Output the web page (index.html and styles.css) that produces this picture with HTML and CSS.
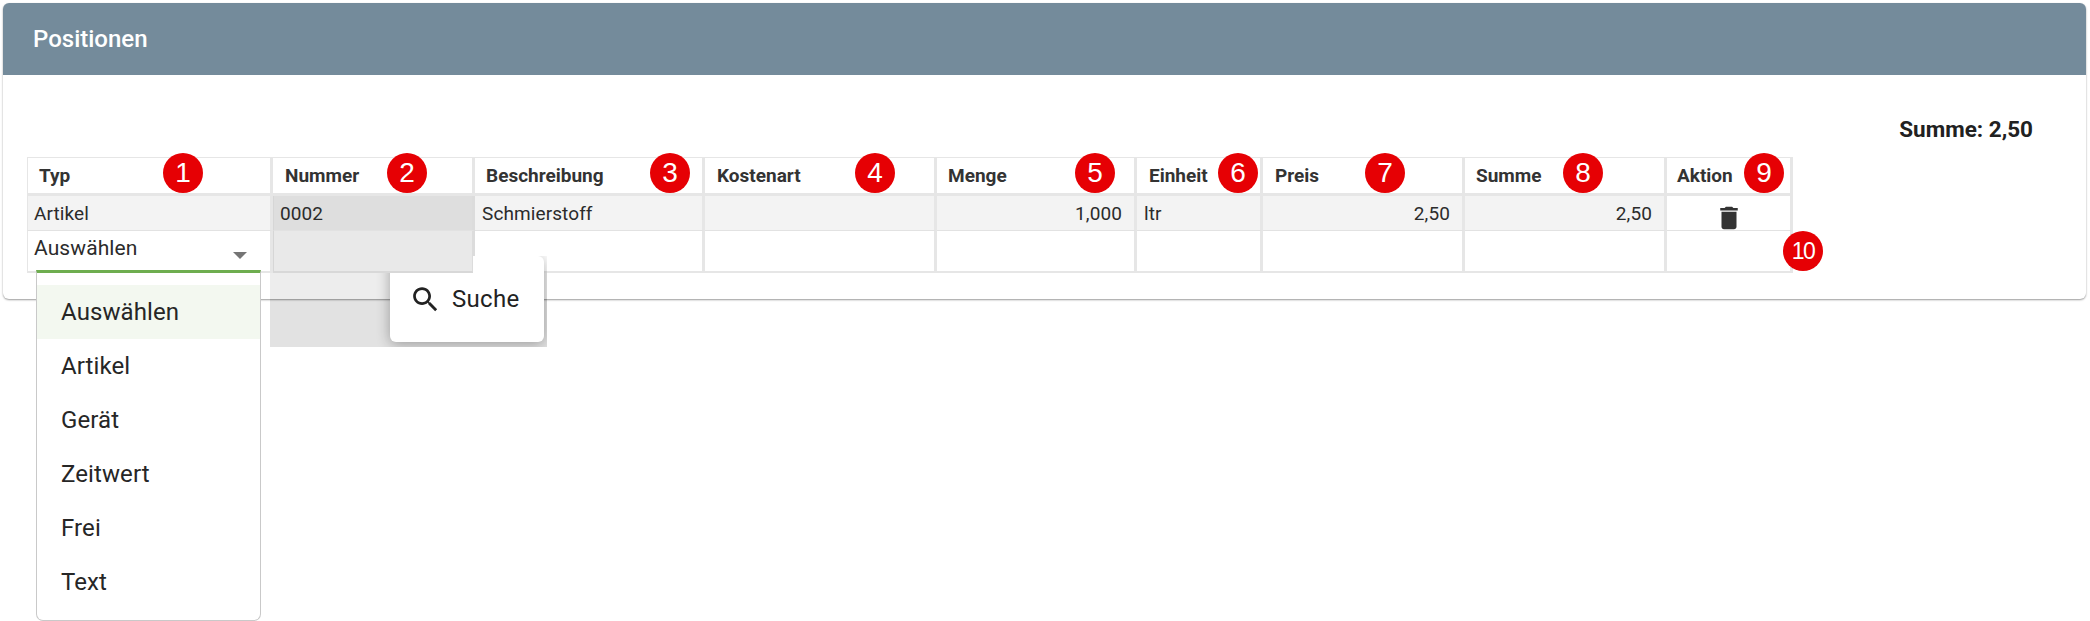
FILE: index.html
```html
<!DOCTYPE html>
<html lang="de">
<head>
<meta charset="utf-8">
<title>Positionen</title>
<link rel="stylesheet" href="styles.css">
</head>
<body>
<div class="page">
  <section class="card">
    <header class="card-head">Positionen</header>
    <div class="card-body">
      <div class="total">Summe: 2,50</div>
      <table class="grid">
        <colgroup>
          <col class="c1"><col class="c2"><col class="c3"><col class="c4"><col class="c5"><col class="c6"><col class="c7"><col class="c8"><col class="c9">
        </colgroup>
        <thead>
          <tr>
            <th>Typ<span class="badge b1">1</span></th>
            <th>Nummer<span class="badge b2">2</span></th>
            <th>Beschreibung<span class="badge b3">3</span></th>
            <th>Kostenart<span class="badge b4">4</span></th>
            <th>Menge<span class="badge b5">5</span></th>
            <th>Einheit<span class="badge b6">6</span></th>
            <th>Preis<span class="badge b7">7</span></th>
            <th>Summe<span class="badge b8">8</span></th>
            <th>Aktion<span class="badge b9">9</span></th>
          </tr>
        </thead>
        <tbody>
          <tr class="row-data">
            <td>Artikel</td>
            <td class="num-cell">0002</td>
            <td>Schmierstoff</td>
            <td></td>
            <td class="right">1,000</td>
            <td>ltr</td>
            <td class="right">2,50</td>
            <td class="right">2,50</td>
            <td class="action">
              <svg class="trash" viewBox="0 0 24 24" aria-hidden="true"><path d="M6 19c0 1.1.9 2 2 2h8c1.1 0 2-.9 2-2V7H6v12zM19 4h-3.5l-1-1h-5l-1 1H5v2h14V4z"/></svg>
            </td>
          </tr>
          <tr class="row-edit">
            <td><div class="select-value"><span>Auswählen</span><i class="caret"></i></div></td>
            <td class="num-edit"></td>
            <td></td>
            <td></td>
            <td></td>
            <td></td>
            <td></td>
            <td></td>
            <td class="last"><span class="badge b10">10</span></td>
          </tr>
        </tbody>
      </table>
    </div>
  </section>

  <div class="search-layer">
    <div class="search-shade"></div>
    <div class="search-pop">
      <svg class="search-icon" viewBox="0 0 24 24" aria-hidden="true"><path d="M15.5 14h-.79l-.28-.27C15.41 12.59 16 11.11 16 9.5 16 5.91 13.09 3 9.5 3S3 5.91 3 9.5 5.91 16 9.5 16c1.61 0 3.09-.59 4.23-1.57l.27.28v.79l5 4.99L20.49 19l-4.99-5zm-6 0C7.01 14 5 11.99 5 9.5S7.01 5 9.5 5 14 7.01 14 9.5 11.99 14 9.5 14z"/></svg>
      <span>Suche</span>
    </div>
  </div>

  <ul class="menu">
    <li class="active">Auswählen</li>
    <li>Artikel</li>
    <li>Gerät</li>
    <li>Zeitwert</li>
    <li>Frei</li>
    <li>Text</li>
  </ul>
</div>
</body>
</html>
```
FILE: styles.css
```css
* { box-sizing: border-box; }
html, body { margin: 0; padding: 0; height: 100%; overflow: hidden; background: #fff; }
body { font-family: Roboto, "Liberation Sans", sans-serif; color: #2b2b2b; }
.page { position: relative; width: 2090px; height: 621px; padding: 3px 4px 0 3px; }

.card { border-radius: 6px; background: #fff; box-shadow: 0 1px 2px rgba(0,0,0,.4); height: 296px; }
.card-head { height: 72px; padding: 0 30px; display: flex; align-items: center; background: #748b9b; color: #fff; font-size: 24px; font-weight: 500; border-radius: 6px 6px 0 0; }
.card-body { padding: 0 0 0 24px; }
.total { height: 82px; padding: 42px 53px 0 0; text-align: right; font-size: 22.5px; line-height: 24px; font-weight: 700; color: #212121; }

.grid { border-collapse: separate; border-spacing: 0; table-layout: fixed; width: 1766px; font-size: 19px; }
.c1 { width: 246px; } .c2 { width: 202px; } .c3 { width: 230px; } .c4 { width: 232px; } .c5 { width: 200px; }
.c6 { width: 126px; } .c7 { width: 202px; } .c8 { width: 202px; } .c9 { width: 126px; }

th, td { padding: 0 6px 0 7px; border-right: 3px solid #e6e6e6; text-align: left; font-weight: 400; white-space: nowrap; letter-spacing: .1px; }
th:first-child, td:first-child { border-left: 1px solid #e6e6e6; padding-left: 6px; }
th { position: relative; height: 39px; padding-left: 12px; border-top: 1px solid #e6e6e6; border-bottom: 3px solid #e6e6e6; font-weight: 700; font-size: 19px; color: #333; background: #fff; letter-spacing: 0; }
th:first-child { padding-left: 11px; }
th:nth-child(3), th:nth-child(5), th:nth-child(8) { padding-left: 11px; }
th:nth-child(9) { padding-left: 10px; }
.row-data td { height: 35px; background: #f3f3f3; border-bottom: 1px solid #e2e2e2; }
.row-edit td { position: relative; height: 42px; border-bottom: 2px solid #e6e6e6; background: #fff; }
td.right { text-align: right; padding-right: 12px; }
td.action { background: #fff; padding: 0; text-align: center; line-height: 0; vertical-align: bottom; }
td.num-cell { background: #dedede; border-left: 1px solid #d6d6d6; padding-left: 6px; }
.row-edit td.num-edit { background: #e9e9e9; }
.row-data td.num-cell, .row-edit td.num-edit { border-right-color: #dcdcdc; }
.row-edit td.num-edit { border-left: 1px solid #d6d6d6; border-bottom-color: #d8d8d8; }

.trash { width: 30px; height: 30px; fill: #333; margin-bottom: -3px; }

.select-value { display: flex; align-items: center; justify-content: space-between; padding: 0 17px 0 0; height: 40px; font-size: 21px; }
.select-value span { transform: translateY(-3px); }
.caret { width: 0; height: 0; margin-top: 8px; border-left: 7px solid transparent; border-right: 7px solid transparent; border-top: 7px solid #757575; }

.badge { position: absolute; width: 40px; height: 40px; border-radius: 50%; background: #e60004; color: #fff; font-family: "Liberation Sans", Arial, sans-serif; font-weight: 400; font-size: 28px; line-height: 40px; letter-spacing: 0; text-align: center; top: -5px; z-index: 2; }
.b1 { left: 135px; } .b2 { left: 114px; } .b3 { left: 175px; } .b4 { left: 150px; } .b5 { left: 138px; }
.b6 { left: 81px; } .b7 { left: 102px; } .b8 { left: 98px; } .b9 { left: 77px; }
.b10 { left: 116px; top: 0; font-size: 23px; letter-spacing: -1.5px; }

.search-layer { position: absolute; left: 270px; top: 190px; width: 277px; height: 157px; clip-path: polygon(0 83px, 203px 83px, 203px 66px, 277px 66px, 277px 157px, 0 157px); z-index: 3; }
.search-shade { position: absolute; left: 0; top: 83px; width: 277px; height: 74px; background: linear-gradient(rgba(0,0,0,.07) 0 26px, rgba(0,0,0,.115) 26px); }
.search-pop { position: absolute; left: 120px; top: 66px; width: 154px; height: 86px; padding-left: 19px; display: flex; align-items: center; gap: 10px; background: #fff; border-radius: 6px; box-shadow: 0 2px 14px rgba(0,0,0,.32); font-size: 24px; letter-spacing: .3px; color: #222; }
.search-icon { width: 33px; height: 33px; fill: #222; }

.menu { position: absolute; left: 36px; top: 270px; width: 225px; height: 351px; margin: 0; padding: 12px 0 0; list-style: none; background: #fff; border: 1px solid #c9c9c9; border-top: 3px solid #6ead4f; border-radius: 0 0 7px 7px; font-size: 24px; letter-spacing: .1px; color: #262626; z-index: 4; }
.menu li { height: 54px; padding-left: 24px; display: flex; align-items: center; }
.menu li.active { background: #f3f8f0; }
```
